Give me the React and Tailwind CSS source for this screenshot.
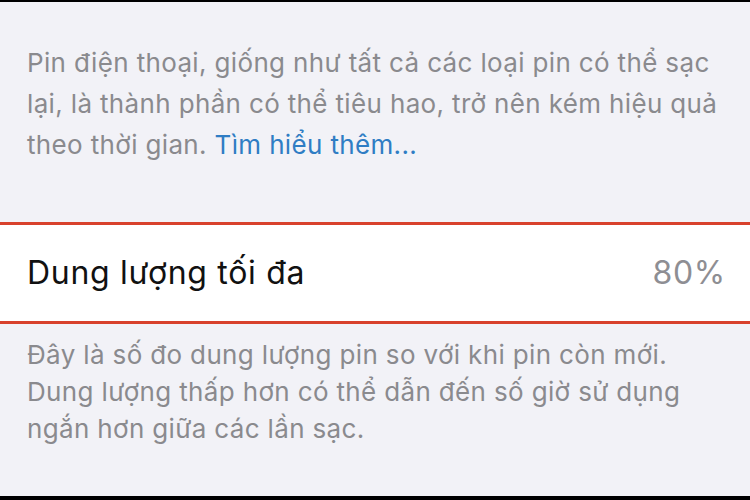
import React from 'react';

// Màn hình "Tình trạng pin" - phần dung lượng tối đa
const App = () => {
  return (
    <div
      className="w-[750px] h-[500px] overflow-hidden bg-[#f2f2f7] flex flex-col"
      style={{ fontFamily: 'Inter, "Open Sans", "Liberation Sans", sans-serif' }}
    >
      {/* dải đen phía trên */}
      <div className="h-[2px] bg-black shrink-0" />

      {/* đoạn mô tả */}
      <p className="pt-[40px] pl-[27px] text-[26px] leading-[41px] tracking-[0.35px] text-[#8a8a8e] whitespace-nowrap">
        Pin điện thoại, giống như tất cả các loại pin có thể sạc
        <br />
        lại, là thành phần có thể tiêu hao, trở nên kém hiệu quả
        <br />
        theo thời gian. <span className="text-[#2f7dc4]">Tìm hiểu thêm...</span>
      </p>

      {/* hàng dung lượng tối đa */}
      <div className="mt-[57px] h-[102px] shrink-0 bg-white border-y-[3px] border-[#d8412c] flex items-center justify-between pl-[27px] pr-[24px]">
        <span className="text-[32px] tracking-[0.7px] text-[#111]">Dung lượng tối đa</span>
        <span className="text-[32px] tracking-[0.7px] text-[#8e8e93]">80%</span>
      </div>

      {/* chú thích */}
      <p className="pt-[12px] pl-[27px] text-[26px] leading-[37px] tracking-[0.35px] text-[#8a8a8e] whitespace-nowrap">
        Đây là số đo dung lượng pin so với khi pin còn mới.
        <br />
        Dung lượng thấp hơn có thể dẫn đến số giờ sử dụng
        <br />
        ngắn hơn giữa các lần sạc.
      </p>

      <div className="flex-1" />
      {/* dải đen phía dưới */}
      <div className="h-[4px] bg-black shrink-0" />
    </div>
  );
};

export default App;
